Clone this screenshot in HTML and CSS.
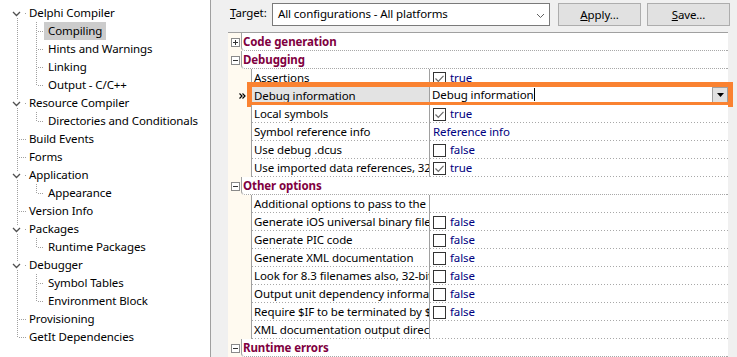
FILE: index.html
```html
<!DOCTYPE html>
<html>
<head>
<meta charset="utf-8">
<link rel="stylesheet" href="styles.css">
</head>
<body>
<div class="app">
  <aside class="tree">
    <div class="ti"><span class="g1 root first"><svg class="chev" width="9" height="6" viewBox="0 0 9 6"><path d="M1 1L4.5 4.5L8 1" fill="none" stroke="#505050" stroke-width="1.3"/></svg></span><span class="tl">Delphi Compiler</span></div>
    <div class="ti"><span class="g1 pass"></span><span class="g2 mid"></span><span class="tl tl2 sel">Compiling</span></div>
    <div class="ti"><span class="g1 pass"></span><span class="g2 mid"></span><span class="tl tl2">Hints and Warnings</span></div>
    <div class="ti"><span class="g1 pass"></span><span class="g2 mid"></span><span class="tl tl2">Linking</span></div>
    <div class="ti"><span class="g1 pass"></span><span class="g2 end"></span><span class="tl tl2">Output - C/C++</span></div>
    <div class="ti"><span class="g1 root"><svg class="chev" width="9" height="6" viewBox="0 0 9 6"><path d="M1 1L4.5 4.5L8 1" fill="none" stroke="#505050" stroke-width="1.3"/></svg></span><span class="tl">Resource Compiler</span></div>
    <div class="ti"><span class="g1 pass"></span><span class="g2 end"></span><span class="tl tl2">Directories and Conditionals</span></div>
    <div class="ti"><span class="g1 leaf"></span><span class="tl">Build Events</span></div>
    <div class="ti"><span class="g1 leaf"></span><span class="tl">Forms</span></div>
    <div class="ti"><span class="g1 root"><svg class="chev" width="9" height="6" viewBox="0 0 9 6"><path d="M1 1L4.5 4.5L8 1" fill="none" stroke="#505050" stroke-width="1.3"/></svg></span><span class="tl">Application</span></div>
    <div class="ti"><span class="g1 pass"></span><span class="g2 end"></span><span class="tl tl2">Appearance</span></div>
    <div class="ti"><span class="g1 leaf"></span><span class="tl">Version Info</span></div>
    <div class="ti"><span class="g1 root"><svg class="chev" width="9" height="6" viewBox="0 0 9 6"><path d="M1 1L4.5 4.5L8 1" fill="none" stroke="#505050" stroke-width="1.3"/></svg></span><span class="tl">Packages</span></div>
    <div class="ti"><span class="g1 pass"></span><span class="g2 end"></span><span class="tl tl2">Runtime Packages</span></div>
    <div class="ti"><span class="g1 root"><svg class="chev" width="9" height="6" viewBox="0 0 9 6"><path d="M1 1L4.5 4.5L8 1" fill="none" stroke="#505050" stroke-width="1.3"/></svg></span><span class="tl">Debugger</span></div>
    <div class="ti"><span class="g1 pass"></span><span class="g2 mid"></span><span class="tl tl2">Symbol Tables</span></div>
    <div class="ti"><span class="g1 pass"></span><span class="g2 end"></span><span class="tl tl2">Environment Block</span></div>
    <div class="ti"><span class="g1 leaf"></span><span class="tl">Provisioning</span></div>
    <div class="ti"><span class="g1 last"></span><span class="tl">GetIt Dependencies</span></div>
  </aside>

  <main class="pane">
    <div class="toolbar">
      <span class="target"><u>T</u>arget:</span>
      <div class="combo"><span>All configurations - All platforms</span><svg width="9" height="6" viewBox="0 0 9 6"><path d="M1 1L4.5 4.5L8 1" fill="none" stroke="#606060" stroke-width="1"/></svg></div>
      <button class="btn"><u>A</u>pply...</button>
      <button class="btn btn2"><u>S</u>ave...</button>
    </div>

    <div class="grid">
      <div class="row cat"><span class="cgut"><svg width="9" height="9" viewBox="0 0 9 9"><rect x=".5" y=".5" width="8" height="8" fill="#fff" stroke="#8a8a8a"/><path d="M2 4.5h5M4.5 2v5" stroke="#333" stroke-width="1"/></svg></span><span class="clabel">Code generation</span></div>
      <div class="row cat"><span class="cgut"><svg width="9" height="9" viewBox="0 0 9 9"><rect x=".5" y=".5" width="8" height="8" fill="#fff" stroke="#8a8a8a"/><path d="M2 4.5h5" stroke="#333" stroke-width="1"/></svg></span><span class="clabel">Debugging</span></div>

      <div class="row prop"><span class="gut"></span><span class="name">Assertions</span><span class="val"><svg class="cb" width="13" height="13" viewBox="0 0 13 13"><rect x=".5" y=".5" width="12" height="12" fill="#fff" stroke="#333"/><path d="M2.5 6.5l2.8 2.8L10.5 3.8" fill="none" stroke="#6a6a6a" stroke-width="1.2"/></svg><span class="v">true</span></span></div>

      <div class="row prop selected">
        <span class="gut"><svg class="mark" width="7" height="6" viewBox="0 0 7 6"><path d="M0.5 0.5L3 3L0.5 5.5M3.5 0.5L6 3L3.5 5.5" fill="none" stroke="#000" stroke-width="1.2"/></svg></span>
        <span class="name">Debug information</span>
        <span class="val edit"><span class="etext">Debug information</span><span class="caret"></span><span class="dd"><svg width="7" height="4" viewBox="0 0 7 4"><path d="M0 0h7L3.5 4z" fill="#000"/></svg></span></span>
        <span class="hl"></span>
      </div>

      <div class="row prop"><span class="gut"></span><span class="name">Local symbols</span><span class="val"><svg class="cb" width="13" height="13" viewBox="0 0 13 13"><rect x=".5" y=".5" width="12" height="12" fill="#fff" stroke="#333"/><path d="M2.5 6.5l2.8 2.8L10.5 3.8" fill="none" stroke="#6a6a6a" stroke-width="1.2"/></svg><span class="v">true</span></span></div>
      <div class="row prop"><span class="gut"></span><span class="name">Symbol reference info</span><span class="val"><span class="v">Reference info</span></span></div>
      <div class="row prop"><span class="gut"></span><span class="name">Use debug .dcus</span><span class="val"><svg class="cb" width="13" height="13" viewBox="0 0 13 13"><rect x=".5" y=".5" width="12" height="12" fill="#fff" stroke="#333"/></svg><span class="v">false</span></span></div>
      <div class="row prop"><span class="gut"></span><span class="name">Use imported data references, 32-bit</span><span class="val"><svg class="cb" width="13" height="13" viewBox="0 0 13 13"><rect x=".5" y=".5" width="12" height="12" fill="#fff" stroke="#333"/><path d="M2.5 6.5l2.8 2.8L10.5 3.8" fill="none" stroke="#6a6a6a" stroke-width="1.2"/></svg><span class="v">true</span></span></div>

      <div class="row cat"><span class="cgut"><svg width="9" height="9" viewBox="0 0 9 9"><rect x=".5" y=".5" width="8" height="8" fill="#fff" stroke="#8a8a8a"/><path d="M2 4.5h5" stroke="#333" stroke-width="1"/></svg></span><span class="clabel">Other options</span></div>

      <div class="row prop"><span class="gut"></span><span class="name">Additional options to pass to the compiler</span><span class="val"></span></div>
      <div class="row prop"><span class="gut"></span><span class="name">Generate iOS universal binary file</span><span class="val"><svg class="cb" width="13" height="13" viewBox="0 0 13 13"><rect x=".5" y=".5" width="12" height="12" fill="#fff" stroke="#333"/></svg><span class="v">false</span></span></div>
      <div class="row prop"><span class="gut"></span><span class="name">Generate PIC code</span><span class="val"><svg class="cb" width="13" height="13" viewBox="0 0 13 13"><rect x=".5" y=".5" width="12" height="12" fill="#fff" stroke="#333"/></svg><span class="v">false</span></span></div>
      <div class="row prop"><span class="gut"></span><span class="name">Generate XML documentation</span><span class="val"><svg class="cb" width="13" height="13" viewBox="0 0 13 13"><rect x=".5" y=".5" width="12" height="12" fill="#fff" stroke="#333"/></svg><span class="v">false</span></span></div>
      <div class="row prop"><span class="gut"></span><span class="name">Look for 8.3 filenames also, 32-bit</span><span class="val"><svg class="cb" width="13" height="13" viewBox="0 0 13 13"><rect x=".5" y=".5" width="12" height="12" fill="#fff" stroke="#333"/></svg><span class="v">false</span></span></div>
      <div class="row prop"><span class="gut"></span><span class="name">Output unit dependency information</span><span class="val"><svg class="cb" width="13" height="13" viewBox="0 0 13 13"><rect x=".5" y=".5" width="12" height="12" fill="#fff" stroke="#333"/></svg><span class="v">false</span></span></div>
      <div class="row prop"><span class="gut"></span><span class="name">Require $IF to be terminated by $IFEND</span><span class="val"><svg class="cb" width="13" height="13" viewBox="0 0 13 13"><rect x=".5" y=".5" width="12" height="12" fill="#fff" stroke="#333"/></svg><span class="v">false</span></span></div>
      <div class="row prop"><span class="gut"></span><span class="name">XML documentation output directory</span><span class="val"></span></div>

      <div class="row cat"><span class="cgut"><svg width="9" height="9" viewBox="0 0 9 9"><rect x=".5" y=".5" width="8" height="8" fill="#fff" stroke="#8a8a8a"/><path d="M2 4.5h5" stroke="#333" stroke-width="1"/></svg></span><span class="clabel">Runtime errors</span></div>
    </div>
  </main>
</div>
</body>
</html>
```
FILE: styles.css
```css
:root {
  --dotv: repeating-linear-gradient(to bottom, #a0a0a0 0 1px, transparent 1px 2px);
  --doth: repeating-linear-gradient(to right, #a0a0a0 0 1px, transparent 1px 2px);
  --sep: linear-gradient(to right, #a8a8a8 1px, transparent 1px);
}

html, body {
  margin: 0;
  padding: 0;
}

body {
  background: #f0f0f0;
  font-family: "Noto Sans", "Segoe UI", sans-serif;
  font-size: 11.5px;
  letter-spacing: -0.1px;
  color: #000;
  width: 737px;
  height: 357px;
  overflow: hidden;
}

.app {
  display: flex;
  height: 357px;
}

/* ---------- tree ---------- */
.tree {
  width: 210px;
  flex: none;
  background: #fff;
  border-right: 1px solid #a0a0a0;
  padding-top: 4px;
  box-sizing: content-box;
}

.ti {
  display: flex;
  align-items: center;
  height: 18px;
}

.g1 {
  width: 27px;
  height: 18px;
  flex: none;
  background-repeat: no-repeat;
}

.g1.pass {
  background: var(--dotv) 17px 0 / 1px 18px no-repeat;
}

.g1.leaf {
  background:
    var(--doth) 19px 9px / 8px 1px no-repeat,
    var(--dotv) 17px 0 / 1px 18px no-repeat;
}

.g1.last {
  background:
    var(--doth) 19px 9px / 8px 1px no-repeat,
    var(--dotv) 17px 0 / 1px 10px no-repeat;
}

.g1.root {
  display: flex;
  align-items: center;
  box-sizing: border-box;
  padding-left: 12px;
  background:
    linear-gradient(#a0a0a0, #a0a0a0) 25px 9px / 1px 1px no-repeat,
    var(--dotv) 17px 0 / 1px 5px no-repeat,
    var(--dotv) 17px 14px / 1px 4px no-repeat;
}

.g1.root.first {
  background:
    linear-gradient(#a0a0a0, #a0a0a0) 25px 9px / 1px 1px no-repeat,
    var(--dotv) 17px 14px / 1px 4px no-repeat;
}

.chev {
  display: block;
  margin-top: 1px;
}

.g2 {
  width: 17px;
  height: 18px;
  flex: none;
}

.g2.mid {
  background:
    var(--doth) 11px 9px / 6px 1px no-repeat,
    var(--dotv) 9px 0 / 1px 18px no-repeat;
}

.g2.end {
  background:
    var(--doth) 11px 9px / 6px 1px no-repeat,
    var(--dotv) 9px 0 / 1px 10px no-repeat;
}

.tl {
  height: 18px;
  box-sizing: border-box;
  padding: 0 2px;
  line-height: 17px;
  white-space: nowrap;
}

.tl2 {
  padding: 0 4px;
}

.sel {
  background: #cccccc;
}

/* ---------- right pane ---------- */
.pane {
  flex: 1;
  display: flex;
  flex-direction: column;
  min-width: 0;
}

.toolbar {
  height: 33px;
  box-sizing: border-box;
  display: flex;
  align-items: flex-start;
  padding: 3px 0 0 19px;
}

.target {
  width: 42px;
  line-height: 20px;
  flex: none;
}

.combo {
  width: 278px;
  height: 23px;
  box-sizing: border-box;
  border: 1px solid #7a7a7a;
  background: #fff;
  display: flex;
  align-items: center;
  justify-content: space-between;
  padding: 0 4px 2px 5px;
  flex: none;
}

.combo svg {
  margin-top: 4px;
}

.btn {
  margin-left: 8px;
  width: 83px;
  height: 23px;
  box-sizing: border-box;
  border: 1px solid #adadad;
  background: #e1e1e1;
  font: inherit;
  letter-spacing: inherit;
  color: #000;
  padding: 0 0 1px;
  flex: none;
}

.btn2 {
  margin-left: 6px;
}

/* ---------- property grid ---------- */
.grid {
  margin-left: 17px;
  width: 500px;
  flex: 1;
  border-top: 1px solid #a0a0a0;
  background: #fffaf0;
}

.row {
  display: flex;
  height: 18px;
  position: relative;
}

.cgut {
  width: 13px;
  flex: none;
  box-sizing: border-box;
  padding: 5px 0 0 3px;
}

.cgut svg {
  display: block;
}

.clabel {
  flex: 1;
  height: 18px;
  box-sizing: border-box;
  background: #fff;
  border-left: 1px solid #a0a0a0;
  border-bottom: 1px dotted #a8a8a8;
  border-bottom-left-radius: 4px;
  padding: 1px 0 0 1px;
  font-weight: bold;
  color: #800040;
  line-height: 16px;
  white-space: nowrap;
}

.gut {
  width: 23px;
  flex: none;
  box-sizing: border-box;
  padding: 6px 0 0 11px;
}

.mark {
  display: block;
}

.name,
.val {
  height: 18px;
  box-sizing: border-box;
  border-left: 1px solid #a0a0a0;
  background: #fff var(--sep) 0 100% / 3px 1px repeat-x;
  white-space: nowrap;
  overflow: hidden;
}

.name {
  width: 178px;
  flex: none;
  padding: 0 0 0 2px;
  line-height: 17px;
}

.val {
  flex: 1;
  display: flex;
  align-items: flex-start;
  padding: 3px 0 0 3px;
  gap: 4px;
  color: #000080;
}

.val .v {
  line-height: 13px;
  margin-top: -1px;
}

.cb {
  display: block;
  flex: none;
}

.selected .name {
  background-color: #e3e3e3;
}

.val.edit {
  color: #000;
  padding: 0 0 0 2px;
  gap: 0;
}

.etext {
  line-height: 15px;
}

.caret {
  width: 1px;
  height: 13px;
  margin-top: 1px;
  background: #000;
}

.dd {
  margin-left: auto;
  width: 16px;
  height: 16px;
  box-sizing: border-box;
  border: 1px solid #a0a0a0;
  background: #e1e1e1;
  display: flex;
  align-items: center;
  justify-content: center;
}

.dd svg {
  display: block;
}

.hl {
  position: absolute;
  left: 19px;
  right: -5px;
  top: -5px;
  height: 25px;
  box-sizing: border-box;
  border: 5px solid #fa8231;
  pointer-events: none;
}
```
